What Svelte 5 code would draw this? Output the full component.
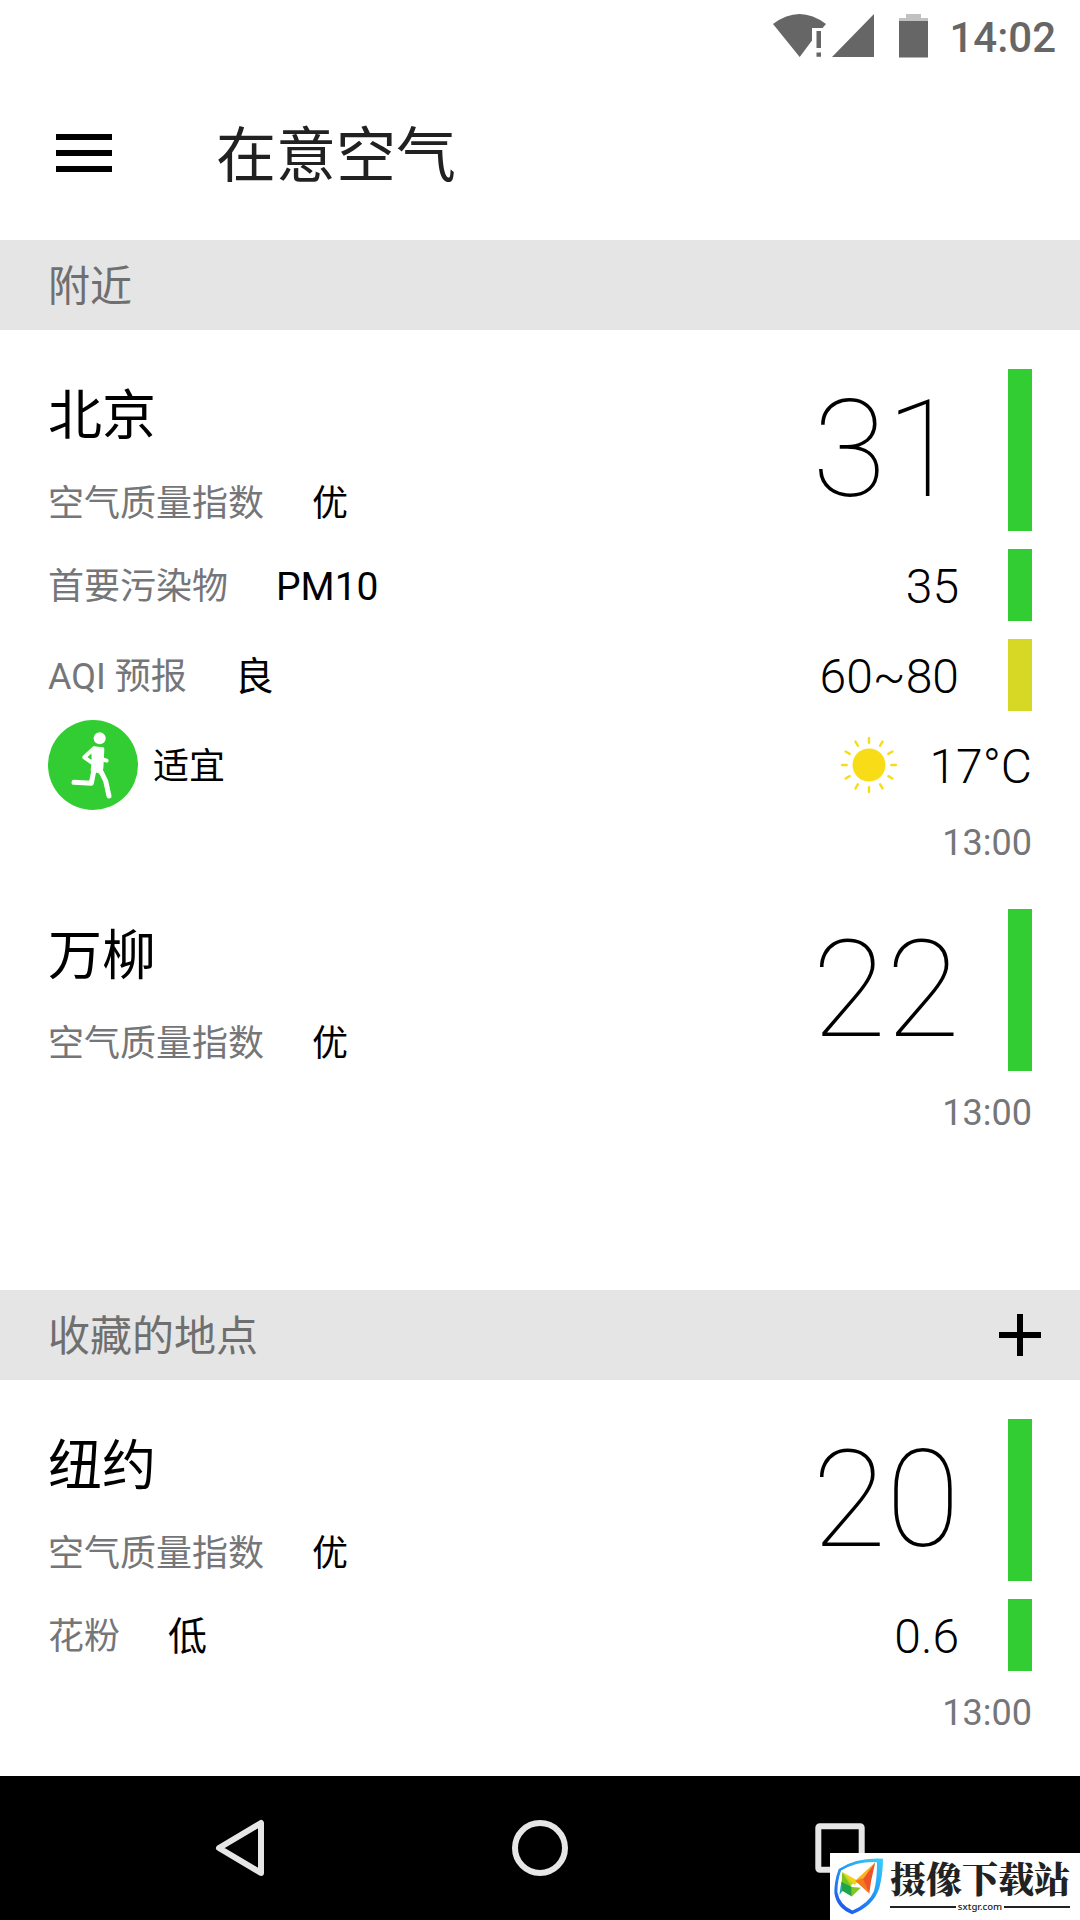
<script>
  const GOOD = "#32cd32";
  const MODERATE = "#d7d725";

  const sections = [
    {
      title: "附近",
      places: [
        {
          name: "北京",
          level: "优",
          aqi: 31,
          color: GOOD,
          rows: [
            { label: "首要污染物", value: "PM10", number: "35", color: GOOD },
            { label: "AQI 预报", value: "良", number: "60~80", color: MODERATE },
          ],
          outdoor: { advice: "适宜", temp: "17°C" },
          time: "13:00",
        },
        { name: "万柳", level: "优", aqi: 22, color: GOOD, rows: [], time: "13:00" },
      ],
    },
    {
      title: "收藏的地点",
      canAdd: true,
      places: [
        {
          name: "纽约",
          level: "优",
          aqi: 20,
          color: GOOD,
          rows: [{ label: "花粉", value: "低", number: "0.6", color: GOOD }],
          time: "13:00",
        },
      ],
    },
  ];

  const rays = Array.from({ length: 12 }, (_, i) => i * 30);
</script>

<div class="screen">
  <div class="status">
    <svg class="status__icons" viewBox="772 13 158 46">
      <path d="M773 24Q799.5 4 826 24L822.5 28H812V40.5L799.7 57Z" />
      <path d="M816.5 31h4.5v17h-4.5zM816.5 52.500h4.500v4.300h-4.500z" />
      <path d="M832 57L874 14V57Z" />
      <path class="faded" d="M906 14h15v4h7v4h-29v-4h7z" />
      <path d="M899 21h29v36.500h-29z" />
    </svg>
    <span class="status__clock">14:02</span>
  </div>

  <header class="toolbar">
    <button class="menu" aria-label="menu"><i></i><i></i><i></i></button>
    <h1>在意空气</h1>
  </header>

  <main>
    {#each sections as section}
      <section>
        <div class="section__head">
          <h2>{section.title}</h2>
          {#if section.canAdd}
            <svg class="add" viewBox="0 0 42 42">
              <path d="M18 0h6v18h18v6H24v18h-6V24H0v-6h18z" />
            </svg>
          {/if}
        </div>

        {#each section.places as place}
          <article class="place">
            <div class="row row--main">
              <div class="place__info">
                <h3>{place.name}</h3>
                <div class="place__level">
                  <span class="label">空气质量指数</span>
                  <span class="level">{place.level}</span>
                </div>
              </div>
              <span class="aqi">{place.aqi}</span>
              <span class="bar" style="background: {place.color}"></span>
            </div>

            {#each place.rows as row}
              <div class="row">
                <span class="label">{row.label}</span>
                <span class="value">{row.value}</span>
                <span class="number">{row.number}</span>
                <span class="bar" style="background: {row.color}"></span>
              </div>
            {/each}

            {#if place.outdoor}
              <div class="row">
                <svg class="runner" viewBox="24 29 270 270">
                  <circle class="runner__disc" cx="159" cy="164" r="135" />
                  <circle cx="179" cy="84" r="18" />
                  <path d="M161 108L189 111Q193 112 193 116L190 175L180 190L152 182L154 155V128Z" />
                  <path class="limb limb--arm" d="M162 114L133 141L156 157" />
                  <path class="limb limb--arm" d="M184 146L200 151" />
                  <path class="limb" d="M162 178L154 219L102 216" />
                  <path class="limb" d="M180 178L197 212L207 257" />
                  <path class="runner__gap" d="M146 141L154 134V147Z" />
                </svg>
                <span class="advice">{place.outdoor.advice}</span>
                <svg class="sun" viewBox="-28 -28 56 56">
                  <circle r="16.500" />
                  {#each rays as angle}
                    <path d="M0 -22.300V-27" transform="rotate({angle})" />
                  {/each}
                </svg>
                <span class="temp">{place.outdoor.temp}</span>
              </div>
            {/if}

            <div class="time">{place.time}</div>
          </article>
        {/each}
      </section>
    {/each}
  </main>

  <nav>
    <svg viewBox="0 0 1080 144">
      <path d="M219 72L261 47V97Z" />
      <circle cx="540" cy="72" r="25" />
      <rect x="818.300" y="50.300" width="43.400" height="43.400" rx="1.500" />
    </svg>
  </nav>

  <div class="badge">
    <svg class="badge__logo" viewBox="160 172 152 172">
      <defs>
        <linearGradient id="shield" x1="1" y1="0" x2="0.3" y2="1">
          <stop offset="0" stop-color="#38d0fb" />
          <stop offset="0.5" stop-color="#2499f8" />
          <stop offset="1" stop-color="#1d5cf0" />
        </linearGradient>
      </defs>
      <path
        fill="url(#shield)"
        fill-rule="evenodd"
        d="M309 177Q233 172 177 207Q164 241 164 278Q170 324 217 342Q280 319 298 264Q309 222 309 177ZM291 187Q232 184 184 212Q173 243 173 276Q180 315 218 331Q266 311 282 274Q292 236 291 187Z"
      />
      <path fill="#b5d91c" d="M187 216L230 242L207 262Z" />
      <path fill="#f4d21c" d="M187 216L236 243L224 255Z" />
      <path fill="#1cabc0" d="M185 244L200 260L179 284Z" />
      <path fill="#78c51e" d="M187 218L216 262L186 250Z" />
      <path fill="#20a449" d="M186 246L216 261V289L187 272Z" />
      <path fill="#82c91e" d="M216 261L243 263L216 289Z" />
      <path fill="#f8b41c" d="M226 242L286 187L252 240Z" />
      <path fill="#f47a20" d="M226 242L252 234L268 280Z" />
      <path fill="#ef5327" d="M286 187L274 241L268 280L250 237Z" />
    </svg>
    <div class="badge__text">
      <strong>摄像下载站</strong>
      <div class="badge__site"><span>sxtgr.com</span></div>
    </div>
  </div>
</div>

<style>
  :global(body) {
    margin: 0;
    background: #fff;
  }

  .screen {
    position: relative;
    display: flex;
    flex-direction: column;
    width: 1080px;
    height: 1920px;
    overflow: hidden;
    background: #fff;
    color: #000;
    font-family: Roboto, "Noto Sans CJK SC", sans-serif;
  }

  h1,
  h2,
  h3 {
    margin: 0;
    font-weight: 400;
  }

  svg {
    display: block;
    flex: none;
  }

  .status {
    display: flex;
    align-items: center;
    justify-content: flex-end;
    box-sizing: border-box;
    height: 72px;
    padding-right: 24px;
    color: #666;
  }

  .status__icons {
    width: 158px;
    height: 46px;
    margin-right: 19px;
    fill: #666;
  }

  .faded {
    fill: #c1c1c1;
  }

  .status__clock {
    padding-top: 3px;
    font-size: 42px;
    font-weight: 500;
    line-height: 48px;
  }

  .toolbar {
    display: flex;
    align-items: center;
    box-sizing: border-box;
    height: 168px;
    padding: 0 56px 6px;
  }

  .menu {
    display: flex;
    flex-direction: column;
    gap: 10px;
    width: 56px;
    margin: 0 104px 0 0;
    padding: 0;
    border: none;
    background: none;
  }

  .menu i {
    height: 6px;
    background: #000;
  }

  h1 {
    padding-top: 8px;
    color: #212121;
    font-size: 60px;
    line-height: 72px;
  }

  main {
    flex: 1;
  }

  section:first-child {
    height: 1050px;
  }

  .section__head {
    display: flex;
    align-items: center;
    justify-content: space-between;
    height: 90px;
    padding: 0 39px 0 48px;
    background: #e5e5e5;
  }

  h2 {
    padding-top: 4px;
    color: #6f6f6f;
    font-size: 42px;
    line-height: 60px;
  }

  .add {
    width: 42px;
    height: 42px;
  }

  .place {
    padding: 30px 48px 0;
  }

  .row {
    display: flex;
    align-items: center;
    height: 90px;
    line-height: 60px;
  }

  .row--main {
    height: 180px;
  }

  .place__info {
    display: flex;
    flex-direction: column;
    gap: 27px;
    padding-top: 9px;
  }

  h3 {
    font-size: 54px;
    line-height: 72px;
  }

  .place__level {
    display: flex;
    line-height: 48px;
  }

  .place__level .label,
  .place__level .level {
    padding-top: 0;
  }

  .label {
    padding-top: 3px;
    color: #757679;
    font-size: 36px;
  }

  .level,
  .value {
    margin-left: 48px;
    padding-top: 3px;
    font-size: 36px;
  }

  .value {
    font-size: 39px;
  }

  .aqi,
  .number {
    margin-left: auto;
    margin-right: 48px;
    font-size: 48px;
    font-weight: 300;
  }

  .number {
    padding-top: 3px;
    margin-right: 49px;
  }

  .aqi {
    font-size: 135px;
    font-weight: 100;
    line-height: 162px;
  }

  .bar {
    align-self: stretch;
    width: 24px;
    margin: 9px 0;
  }

  .runner {
    width: 90px;
    height: 90px;
    fill: #fff;
  }

  .runner__disc,
  .runner__gap {
    fill: #32cd32;
  }

  .limb {
    fill: none;
    stroke: #fff;
    stroke-width: 15;
    stroke-linecap: round;
    stroke-linejoin: round;
  }

  .limb--arm {
    stroke-width: 12;
  }

  .advice {
    margin-left: 15px;
    padding-top: 3px;
    font-size: 36px;
  }

  .sun {
    width: 56px;
    height: 56px;
    margin-left: auto;
    margin-right: 32px;
    fill: #f8dc17;
    stroke: #f8dc17;
    stroke-width: 2.4;
    stroke-linecap: round;
  }

  .sun circle {
    stroke: none;
  }

  .temp {
    padding-top: 3px;
    font-size: 48px;
    font-weight: 300;
  }

  .time {
    box-sizing: border-box;
    height: 60px;
    padding-top: 6px;
    color: #757679;
    font-size: 36px;
    line-height: 55px;
    text-align: right;
  }

  nav {
    height: 144px;
    background: #000;
  }

  nav svg {
    fill: none;
    stroke: #e6e6e6;
    stroke-width: 6;
    stroke-linejoin: round;
  }

  .badge {
    position: absolute;
    right: 0;
    bottom: 0;
    display: flex;
    box-sizing: border-box;
    width: 250px;
    height: 67px;
    padding: 4px 11px 0 3px;
    background: #fff;
    color: #222;
  }

  .badge__logo {
    width: 51px;
    height: 58px;
  }

  .badge__text {
    flex: 1;
    margin-left: 6px;
  }

  .badge__text strong {
    display: block;
    font-family: "Noto Serif CJK SC", "Noto Sans CJK SC", serif;
    font-size: 36px;
    font-weight: 900;
    line-height: 42px;
    white-space: nowrap;
  }

  .badge__site {
    display: flex;
    align-items: center;
    gap: 2px;
    font-family: "Noto Sans", sans-serif;
    font-size: 9.6px;
    font-weight: 500;
    line-height: 16px;
  }

  .badge__site::before,
  .badge__site::after {
    content: "";
    flex: 1;
    height: 2px;
    background: #222;
  }
</style>
